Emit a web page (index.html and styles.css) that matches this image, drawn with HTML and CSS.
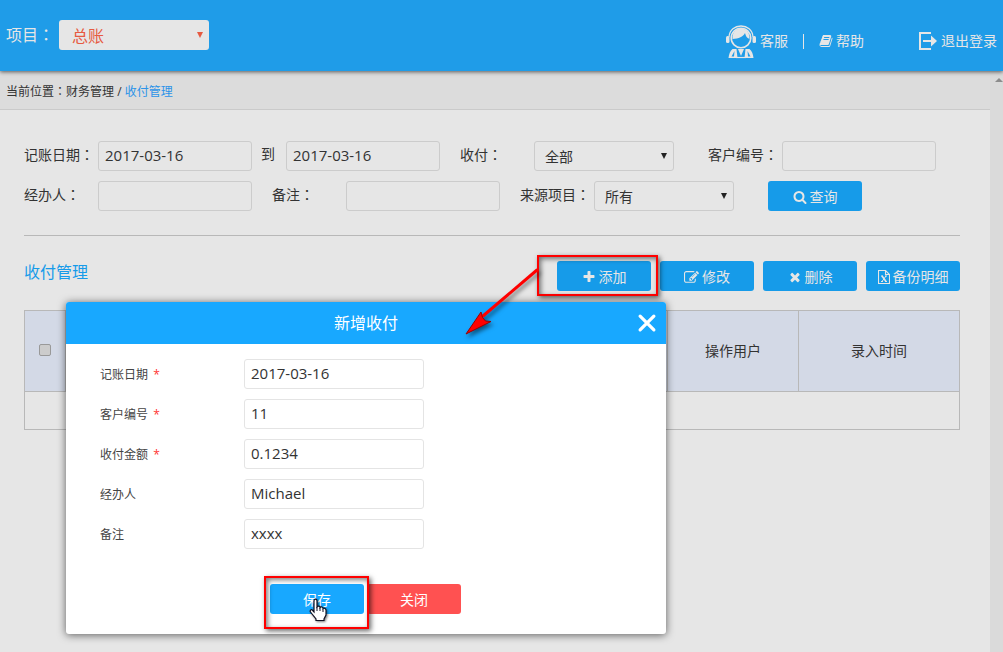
FILE: index.html
```html
<!DOCTYPE html>
<html lang="zh-CN">
<head>
<meta charset="utf-8">
<title>收付管理</title>
<link rel="stylesheet" href="styles.css">
</head>
<body>
<header class="topbar">
  <div class="project">
    <label for="project">项目<span class="colon" lang="zh-TW">：</span></label>
    <span class="select select-project"><select id="project"><option>总账</option></select></span>
  </div>
  <nav class="tools">
    <a href="#" class="tool">
      <svg class="icon-agent" viewBox="0 0 30 34" fill="none" stroke="currentColor">
        <path d="M3 12C3.500 4.500 9 1 15 1s11.500 3.500 12 11" stroke-width="1.300"/>
        <circle cx="15" cy="13" r="9.800" stroke-width="1.600"/>
        <path d="M6.500 14c-.5-7 4-10.500 8.500-10.500S24 7 23.500 14c-2-1-3.500-2-4.500-6-2 4-6 5.500-12.500 6z" fill="currentColor" stroke="none"/>
        <rect x="0" y="11" width="3.500" height="7" rx="1.500" fill="currentColor" stroke="none"/>
        <rect x="26.500" y="11" width="3.500" height="7" rx="1.500" fill="currentColor" stroke="none"/>
        <path d="M6.500 24h4l1 9h-9c.5-4 1.500-7 4-9zM23.500 24h-4l-1 9h9c-.5-4-1.500-7-4-9zM12 24h6l-3 7z" fill="currentColor" stroke="none"/>
        <path d="M8.500 26L5.500 31.500H8zM21.500 26l3 5.500H22z" fill="#1f9ce8" stroke="none"/>
        <path d="M10 32.500h10" stroke-width="1.200"/>
      </svg>客服</a>
    <span class="divider"></span>
    <a href="#" class="tool tool-help">
      <svg class="icon" viewBox="0 0 1792 1792" fill="currentColor"><path d="M1703 478q40 57 18 129l-275 906q-19 64-76.500 107.500t-122.500 43.500h-923q-77 0-148.500-53.500t-99.500-131.500q-24-67-2-127 0-4 3-27t4-37q1-8-3-21.500t-3-19.500q2-11 8-21t16.500-23.500 16.500-23.500q23-38 45-91.500t30-91.500q3-10 .5-30t-.5-28q3-11 17-28t17-23q21-36 42-92t25-90q1-9-2.500-32t.5-28q4-13 22-30.500t22-22.500q19-26 42.500-84.500t27.500-96.500q1-8-3-25.500t-2-26.500q2-8 9-18t18-23 17-21q8-12 16.500-30.500t15-35 16-36 19.500-32 26.500-23.500 36-11.500 47.500 5.500l-1 3q38-9 51-9h761q74 0 114 56t18 130l-274 906q-36 119-71.500 153.500t-128.500 34.500h-869q-27 0-38 15-11 16-1 43 24 70 144 70h923q29 0 56-15.500t35-41.500l300-987q7-22 5-57 38 15 59 43zm-1064 2q-4 13 2 22.500t20 9.500h608q13 0 25.500-9.500t16.500-22.500l21-64q4-13-2-22.500t-20-9.500h-608q-13 0-25.500 9.500t-16.500 22.500zm-83 256q-4 13 2 22.500t20 9.500h608q13 0 25.500-9.500t16.500-22.500l21-64q4-13-2-22.500t-20-9.500h-608q-13 0-25.500 9.500t-16.500 22.500z"/></svg>帮助</a>
    <a href="#" class="tool tool-exit">
      <svg class="icon-exit" viewBox="0 0 18 18" fill="none" stroke="currentColor" stroke-width="2"><path d="M12 1H1v16h11M4 9h10"/><path d="M12 3.500l6 5.500-6 5.500z" fill="currentColor" stroke="none"/></svg>退出登录</a>
  </nav>
</header>

<div class="page">
  <main class="content">
    <nav class="breadcrumb">当前位置<span class="colon" lang="zh-TW">：</span>财务管理 / <a href="#">收付管理</a></nav>
    <div class="panel">
      <form class="filters">
        <div class="row">
          <label class="name" for="from">记账日期<span class="colon" lang="zh-TW">：</span></label>
          <input class="field" id="from" type="text" value="2017-03-16">
          <label class="to" for="until">到</label>
          <input class="field" id="until" type="text" value="2017-03-16">
          <label class="name next" for="kind">收付<span class="colon" lang="zh-TW">：</span></label>
          <span class="select"><select id="kind"><option>全部</option></select></span>
          <label class="name far" for="client">客户编号<span class="colon" lang="zh-TW">：</span></label>
          <input class="field" id="client" type="text">
        </div>
        <div class="row">
          <label class="name" for="agent">经办人<span class="colon" lang="zh-TW">：</span></label>
          <input class="field" id="agent" type="text">
          <label class="name next" for="note">备注<span class="colon" lang="zh-TW">：</span></label>
          <input class="field" id="note" type="text">
          <label class="name next" for="source">来源项目<span class="colon" lang="zh-TW">：</span></label>
          <span class="select"><select id="source"><option>所有</option></select></span>
          <button class="btn far" type="button"><svg class="icon" viewBox="0 0 1792 1792" fill="currentColor"><path d="M1216 832q0-185-131.500-316.500t-316.500-131.500-316.500 131.500-131.500 316.500 131.500 316.500 316.500 131.500 316.500-131.500 131.500-316.500zm512 832q0 52-38 90t-90 38q-54 0-90-38l-343-342q-179 124-399 124-143 0-273.500-55.500t-225-150-150-225-55.500-273.500 55.500-273.500 150-225 225-150 273.500-55.500 273.500 55.500 225 150 150 225 55.500 273.500q0 220-124 399l343 343q37 37 37 90z"/></svg>查询</button>
        </div>
      </form>

      <div class="listbar">
        <h2>收付管理</h2>
        <div class="actions">
          <button class="btn marked mark-add" type="button"><svg class="icon" viewBox="0 0 1792 1792" fill="currentColor"><path d="M1600 736v192q0 40-28 68t-68 28h-416v416q0 40-28 68t-68 28h-192q-40 0-68-28t-28-68v-416h-416q-40 0-68-28t-28-68v-192q0-40 28-68t68-28h416v-416q0-40 28-68t68-28h192q40 0 68 28t28 68v416h416q40 0 68 28t28 68z"/></svg>添加</button>
          <button class="btn" type="button"><svg class="icon icon-wide" viewBox="0 0 1792 1792" fill="currentColor"><path d="M888 1184l116-116-152-152-116 116v56h96v96h56zm440-720q-16-16-33 1l-350 350q-17 17-1 33t33-1l350-350q17-17 1-33zm80 594v190q0 119-84.500 203.500t-203.500 84.500h-832q-119 0-203.500-84.500t-84.500-203.500v-832q0-119 84.500-203.500t203.500-84.500h832q63 0 117 25 15 7 18 23 3 17-9 29l-49 49q-14 14-32 8-23-6-45-6h-832q-66 0-113 47t-47 113v832q0 66 47 113t113 47h832q66 0 113-47t47-113v-126q0-13 9-22l64-64q15-15 35-7t20 29zm-96-738l288 288-672 672h-288v-288zm444 132l-92 92-288-288 92-92q28-28 68-28t68 28l152 152q28 28 28 68t-28 68z"/></svg>修改</button>
          <button class="btn" type="button"><svg class="icon" viewBox="0 0 1792 1792" fill="currentColor"><path d="M1490 1322q0 40-28 68l-136 136q-28 28-68 28t-68-28l-294-294-294 294q-28 28-68 28t-68-28l-136-136q-28-28-28-68t28-68l294-294-294-294q-28-28-28-68t28-68l136-136q28-28 68-28t68 28l294 294 294-294q28-28 68-28t68 28l136 136q28 28 28 68t-28 68l-294 294 294 294q28 28 28 68z"/></svg>删除</button>
          <button class="btn" type="button"><svg class="icon-file" viewBox="0 0 12 14" fill="none" stroke="currentColor"><path d="M.5.5h7l4 4v9H.5zM7.500.5v4h4" stroke-width="1.100"/><path d="M4 6l4 5.500" stroke-width="1.600"/><path d="M8 6l-4 5.500M3 6h2M7 6h2M3 11.500h2M7 11.500h2" stroke-width="1"/></svg>备份明细</button>
        </div>
      </div>

      <table class="list">
        <colgroup><col class="c-check"><col><col class="c-user"><col class="c-time"></colgroup>
        <thead><tr><th><input class="check" type="checkbox" aria-label="全选"></th><th></th><th>操作用户</th><th>录入时间</th></tr></thead>
        <tbody><tr><td colspan="4"></td></tr></tbody>
      </table>
    </div>
  </main>
  <div class="gutter"><span class="gutter-up"></span></div>
</div>

<section class="dialog" role="dialog" aria-labelledby="dialog-title">
  <div class="dialog-head">
    <h3 id="dialog-title">新增收付</h3>
    <button class="close" type="button" aria-label="关闭"><svg viewBox="0 0 16 16" stroke="currentColor" stroke-width="2.600" stroke-linecap="round"><path d="M2.500 2.500l11 11M13.500 2.500l-11 11"/></svg></button>
  </div>
  <form class="dialog-form">
    <div class="line"><label for="d-date">记账日期 <i>*</i></label><input class="field" id="d-date" type="text" value="2017-03-16"></div>
    <div class="line"><label for="d-client">客户编号 <i>*</i></label><input class="field" id="d-client" type="text" value="11"></div>
    <div class="line"><label for="d-amount">收付金额 <i>*</i></label><input class="field" id="d-amount" type="text" value="0.1234"></div>
    <div class="line"><label for="d-agent">经办人</label><input class="field" id="d-agent" type="text" value="Michael"></div>
    <div class="line"><label for="d-note">备注</label><input class="field" id="d-note" type="text" value="xxxx"></div>
    <div class="dialog-actions">
      <button class="btn btn-save marked mark-save" type="button">保存</button>
      <button class="btn btn-close" type="button">关闭</button>
    </div>
  </form>
</section>

<svg class="arrow" viewBox="0 0 80 72"><path d="M76 6L22 52" stroke="#f00" stroke-width="3" stroke-linecap="round"/><path d="M5 70L20 48l1.500 5.500 3 3.500 5.500.500z" fill="#f00" stroke="#900" stroke-width="1"/></svg>
<svg class="cursor" viewBox="0 0 18 24"><path d="M5 14V3c0-2.500 3-2.500 3 0v6c1-1.300 3-1 3 .5 1-1 3-.6 3 1 1-.8 3 0 3 1.500v5l-2 4v1.500H7V21L1.500 14c-1-2 1-3 2.200-1.500z" fill="#fff" stroke="#112" stroke-width="1.200"/><path d="M8 9v4M11 10v3M14 11v3" stroke="#112" stroke-width="1"/></svg>
</body>
</html>
```

FILE: styles.css
```css
* { box-sizing: border-box; }

body {
  margin: 0;
  min-height: 100vh;
  display: flex;
  flex-direction: column;
  position: relative;
  background: #e6e6e6;
  color: #333;
  font: 14px/20px "Open Sans", "Noto Sans CJK SC", sans-serif;
}

a { color: inherit; text-decoration: none; }
input, select, button { font: inherit; color: inherit; margin: 0; }
h2, h3 { margin: 0; font-weight: 400; font-size: 16px; }
.colon { font-family: "Noto Sans CJK TC", sans-serif; }

/* Top bar */
.topbar {
  position: relative;
  z-index: 1;
  display: flex;
  justify-content: space-between;
  min-height: 71px;
  padding: 20px 6px 12px;
  background: #1f9ce8;
  color: #e6e6e6;
  box-shadow: 0 1px 4px rgba(0, 0, 0, 0.6);
}
.project { display: flex; align-items: flex-start; font-size: 16px; }
.project label { width: 53px; line-height: 28px; white-space: nowrap; }
.tools { display: flex; align-items: center; align-self: flex-start; padding-top: 3px; }
.tool { display: flex; align-items: center; gap: 4px; }
.tool-help { gap: 3px; }
.tool-exit { margin-left: 55px; }
.divider { width: 1px; height: 15px; margin: 0 15px; background: #e6e6e6; }
.icon { width: 14px; height: 14px; }
.icon-agent { width: 30px; height: 34px; margin-top: 2px; }
.icon-exit { width: 18px; height: 18px; }

/* Form controls */
.field {
  width: 154px;
  height: 30px;
  padding: 0 6px 3px;
  border: 1px solid #ccc;
  border-radius: 3px;
  background: transparent;
  font-size: 15px;
}
.select { position: relative; width: 140px; height: 30px; }
.select select {
  appearance: none;
  width: 100%;
  height: 100%;
  padding: 2px 10px 0;
  border: 1px solid #ccc;
  border-radius: 3px;
  background: transparent;
}
.select::after {
  content: "";
  position: absolute;
  right: 7px;
  top: 12px;
  border: 3px solid transparent;
  border-top: 6px solid #222;
  border-bottom: 0;
  pointer-events: none;
}
.select-project { width: 150px; color: #e65a41; }
.select-project select { padding-left: 13px; border: 0; background: #e6e6e6; }
.select-project::after { right: 6px; border-top-color: #e65a41; }

.btn {
  position: relative;
  display: flex;
  align-items: center;
  justify-content: center;
  gap: 3px;
  width: 94px;
  height: 30px;
  padding: 2px 0 0;
  border: 0;
  border-radius: 3px;
  background: #169be9;
  color: #e6e6e6;
}
.icon-wide { width: 15px; height: 15px; }
.icon-file { width: 12px; height: 14px; }

/* Page body */
.page { flex: 1; display: grid; grid-template-columns: 1fr 13px; }
.gutter { position: relative; background: #dadada; }
.gutter-up {
  display: block;
  margin: 7px 0 0 5px;
  width: 8px;
  border: 4px solid transparent;
  border-top: 0;
  border-bottom-color: #8c8c8c;
}
.breadcrumb {
  padding: 10px 6px 8px;
  border-bottom: 1px solid #cacaca;
  background: #dcdcdc;
  font-size: 12px;
}
.breadcrumb a { color: #2b93e8; }
.panel { padding: 31px 30px 0 24px; }
.filters {
  display: flex;
  flex-direction: column;
  gap: 10px;
  padding-bottom: 24px;
  border-bottom: 1px solid #b8b8b8;
}
.breadcrumb { height: 39px; }
.row { display: flex; }
.name { width: 74px; line-height: 26px; white-space: nowrap; }
.next { margin-left: 20px; }
.far { margin-left: 34px; }
.to { width: 34px; padding-left: 9px; line-height: 26px; }

.listbar { display: flex; justify-content: space-between; padding: 25px 0 19px; }
.listbar h2 { color: #169be9; line-height: 22px; }
.actions { display: flex; gap: 9px; }

.list { width: 100%; table-layout: fixed; border-collapse: collapse; }
.list th, .list td { border: 1px solid #b8b8b8; padding: 0; font-weight: 400; }
.list th { height: 81px; background: #d3d9e6; }
.list td { height: 38px; }
.c-check { width: 41px; }
.c-user { width: 131px; }
.c-time { width: 161px; }
.check {
  appearance: none;
  width: 12px;
  height: 12px;
  border: 1px solid #999;
  border-radius: 2px;
  background: #ccc;
}

/* Dialog */
.dialog {
  position: absolute;
  left: 66px;
  top: 302px;
  z-index: 2;
  width: 600px;
  border-radius: 3px;
  background: #fff;
  box-shadow: 0 1px 8px rgba(0, 0, 0, 0.6);
}
.dialog-head {
  position: relative;
  padding: 10px 0;
  border-radius: 3px 3px 0 0;
  background: #18a8ff;
  color: #fff;
  text-align: center;
}
.dialog-head h3 { line-height: 22px; }
.close {
  position: absolute;
  right: 9px;
  top: 11px;
  width: 20px;
  height: 20px;
  padding: 0;
  border: 0;
  background: none;
}
.close svg { display: block; width: 20px; height: 20px; }
.dialog-form { display: flex; flex-direction: column; gap: 10px; padding: 15px 34px 20px; }
.line { display: flex; align-items: center; }
.line label { width: 144px; padding-top: 2px; font-size: 12px; color: #444; }
.line i { margin-left: 2px; color: #f33; font-style: normal; }
.line .field { width: 180px; border-color: #e4e4e4; }
.dialog-actions { display: flex; gap: 3px; padding: 25px 0 0 170px; }
.btn-save { background: #18a8ff; color: #fff; }
.btn-close { background: #ff5151; color: #fff; }

/* Tutorial marks */
.marked { z-index: 1; }
.marked::before {
  content: "";
  position: absolute;
  border: 2px solid #f00;
  box-shadow: 2px 2px 5px rgba(0, 0, 0, 0.6), inset 2px 2px 5px rgba(0, 0, 0, 0.5);
}
.mark-add::before { inset: -6px -7px -5px -20px; }
.mark-save::before { inset: -8px -5px -15px -6px; }
.arrow, .cursor { position: absolute; z-index: 3; pointer-events: none; }
.arrow {
  left: 461px;
  top: 264px;
  width: 80px;
  height: 72px;
  filter: drop-shadow(2px 3px 2px rgba(0, 0, 0, 0.5));
}
.cursor {
  left: 309px;
  top: 598px;
  width: 18px;
  height: 24px;
  filter: drop-shadow(1px 1px 1px rgba(0, 0, 0, 0.5));
}
```
